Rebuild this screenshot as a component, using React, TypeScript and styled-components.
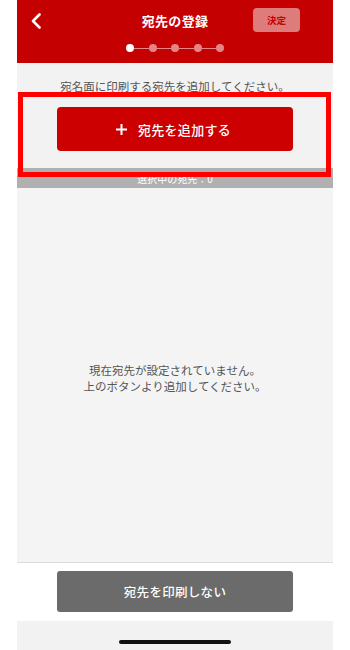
import React from "react";
import styled, { createGlobalStyle } from "styled-components";

const Global = createGlobalStyle`
  html, body { margin: 0; padding: 0; background: #ffffff; }
  body { font-family: "Noto Sans CJK JP", "Noto Sans", sans-serif; }
  * { box-sizing: border-box; }
`;

const Phone = styled.div`
  position: relative;
  width: 316px;
  height: 650px;
  margin-left: 17px;
  display: flex;
  flex-direction: column;
  background: #f2f2f2;
  overflow: hidden;
`;

const Header = styled.header`
  height: 63px;
  background: #c40000;
  display: flex;
  flex-direction: column;
  flex-shrink: 0;
`;

const TopRow = styled.div`
  height: 40px;
  display: grid;
  grid-template-columns: 80px 1fr 80px;
  align-items: center;
`;

const BackButton = styled.div`
  display: flex;
  align-items: center;
  padding-left: 13px;
  padding-top: 1px;
`;

const Title = styled.h1`
  margin: 0;
  text-align: center;
  color: #ffffff;
  font-size: 13px;
  font-weight: 700;
  letter-spacing: 0.3px;
`;

const DecideButton = styled.div`
  width: 47px;
  height: 24px;
  border-radius: 4px;
  background: #de7b7b;
  color: #c40000;
  font-size: 9.5px;
  font-weight: 700;
  display: flex;
  align-items: center;
  justify-content: center;
`;

const Steps = styled.div`
  display: flex;
  align-items: center;
  justify-content: center;
  margin-top: 4px;
`;

const Dot = styled.span<{ $active?: boolean }>`
  width: 8px;
  height: 8px;
  border-radius: 50%;
  background: ${(p) => (p.$active ? "#ffffff" : "#e58585")};
`;

const StepLine = styled.span`
  width: 14.5px;
  height: 1px;
  background: #e58585;
`;

const Intro = styled.section`
  display: flex;
  flex-direction: column;
  align-items: center;
  padding-top: 15px;
  padding-bottom: 17px;
`;

const IntroText = styled.p`
  margin: 0;
  font-size: 11.5px;
  line-height: 16px;
  color: #555555;
`;

const AddButton = styled.button`
  margin-top: 13px;
  width: 236px;
  height: 44px;
  border: none;
  border-radius: 4px;
  background: #cc0000;
  color: #ffffff;
  font-family: inherit;
  font-size: 13px;
  font-weight: 500;
  display: flex;
  align-items: center;
  justify-content: center;
  gap: 11px;
  padding: 0 3px 0 0;
  letter-spacing: 0.3px;
`;

const CountBar = styled.div`
  height: 20px;
  background: #b0b0b0;
  color: #ffffff;
  font-size: 10px;
  display: flex;
  align-items: center;
  justify-content: center;
  padding-top: 1px;
  flex-shrink: 0;
`;

const EmptyArea = styled.div`
  flex: 1;
  display: flex;
  align-items: center;
  justify-content: center;
  background: #f4f4f4;
  padding-top: 6px;
`;

const EmptyText = styled.p`
  margin: 0;
  text-align: center;
  font-size: 11.5px;
  line-height: 16.5px;
  color: #555555;
`;

const Footer = styled.footer`
  border-top: 1px solid #dcdcdc;
  background: #ffffff;
  display: flex;
  justify-content: center;
  padding: 8px 0 9px;
  flex-shrink: 0;
`;

const SkipButton = styled.button`
  width: 236px;
  height: 41px;
  border: none;
  border-radius: 3px;
  background: #6b6b6b;
  color: #ffffff;
  font-family: inherit;
  font-size: 12.5px;
  font-weight: 500;
  letter-spacing: 0.3px;
`;

const HomeArea = styled.div`
  height: 29px;
  background: #f2f2f2;
  display: flex;
  justify-content: center;
  padding-top: 19px;
  flex-shrink: 0;
`;

const HomeIndicator = styled.span`
  width: 112px;
  height: 4px;
  border-radius: 2px;
  background: #111111;
`;

const Highlight = styled.div`
  position: absolute;
  left: 1px;
  top: 92px;
  width: 313px;
  height: 85px;
  border: 5px solid #ff0000;
  pointer-events: none;
`;

export default function App() {
  const steps = [0, 1, 2, 3, 4];
  return (
    <>
      <Global />
      <Phone>
        <Header>
          <TopRow>
            <BackButton>
              <svg width="12" height="16" viewBox="0 0 12 16">
                <path
                  d="M9.5 1.5 L3 8 L9.5 14.5"
                  fill="none"
                  stroke="#ffffff"
                  strokeWidth="2.6"
                  strokeLinecap="round"
                  strokeLinejoin="round"
                />
              </svg>
            </BackButton>
            <Title>宛先の登録</Title>
            <DecideButton>決定</DecideButton>
          </TopRow>
          <Steps>
            {steps.map((s) => (
              <React.Fragment key={s}>
                {s > 0 && <StepLine />}
                <Dot $active={s === 0} />
              </React.Fragment>
            ))}
          </Steps>
        </Header>
        <Intro>
          <IntroText>宛名面に印刷する宛先を追加してください。</IntroText>
          <AddButton>
            <svg width="11" height="11" viewBox="0 0 11 11">
              <path d="M5.5 0 V11 M0 5.5 H11" stroke="#ffffff" strokeWidth="2" />
            </svg>
            <span>宛先を追加する</span>
          </AddButton>
        </Intro>
        <CountBar>選択中の宛先：0</CountBar>
        <EmptyArea>
          <EmptyText>
            現在宛先が設定されていません。
            <br />
            上のボタンより追加してください。
          </EmptyText>
        </EmptyArea>
        <Footer>
          <SkipButton>宛先を印刷しない</SkipButton>
        </Footer>
        <HomeArea>
          <HomeIndicator />
        </HomeArea>
        <Highlight />
      </Phone>
    </>
  );
}
